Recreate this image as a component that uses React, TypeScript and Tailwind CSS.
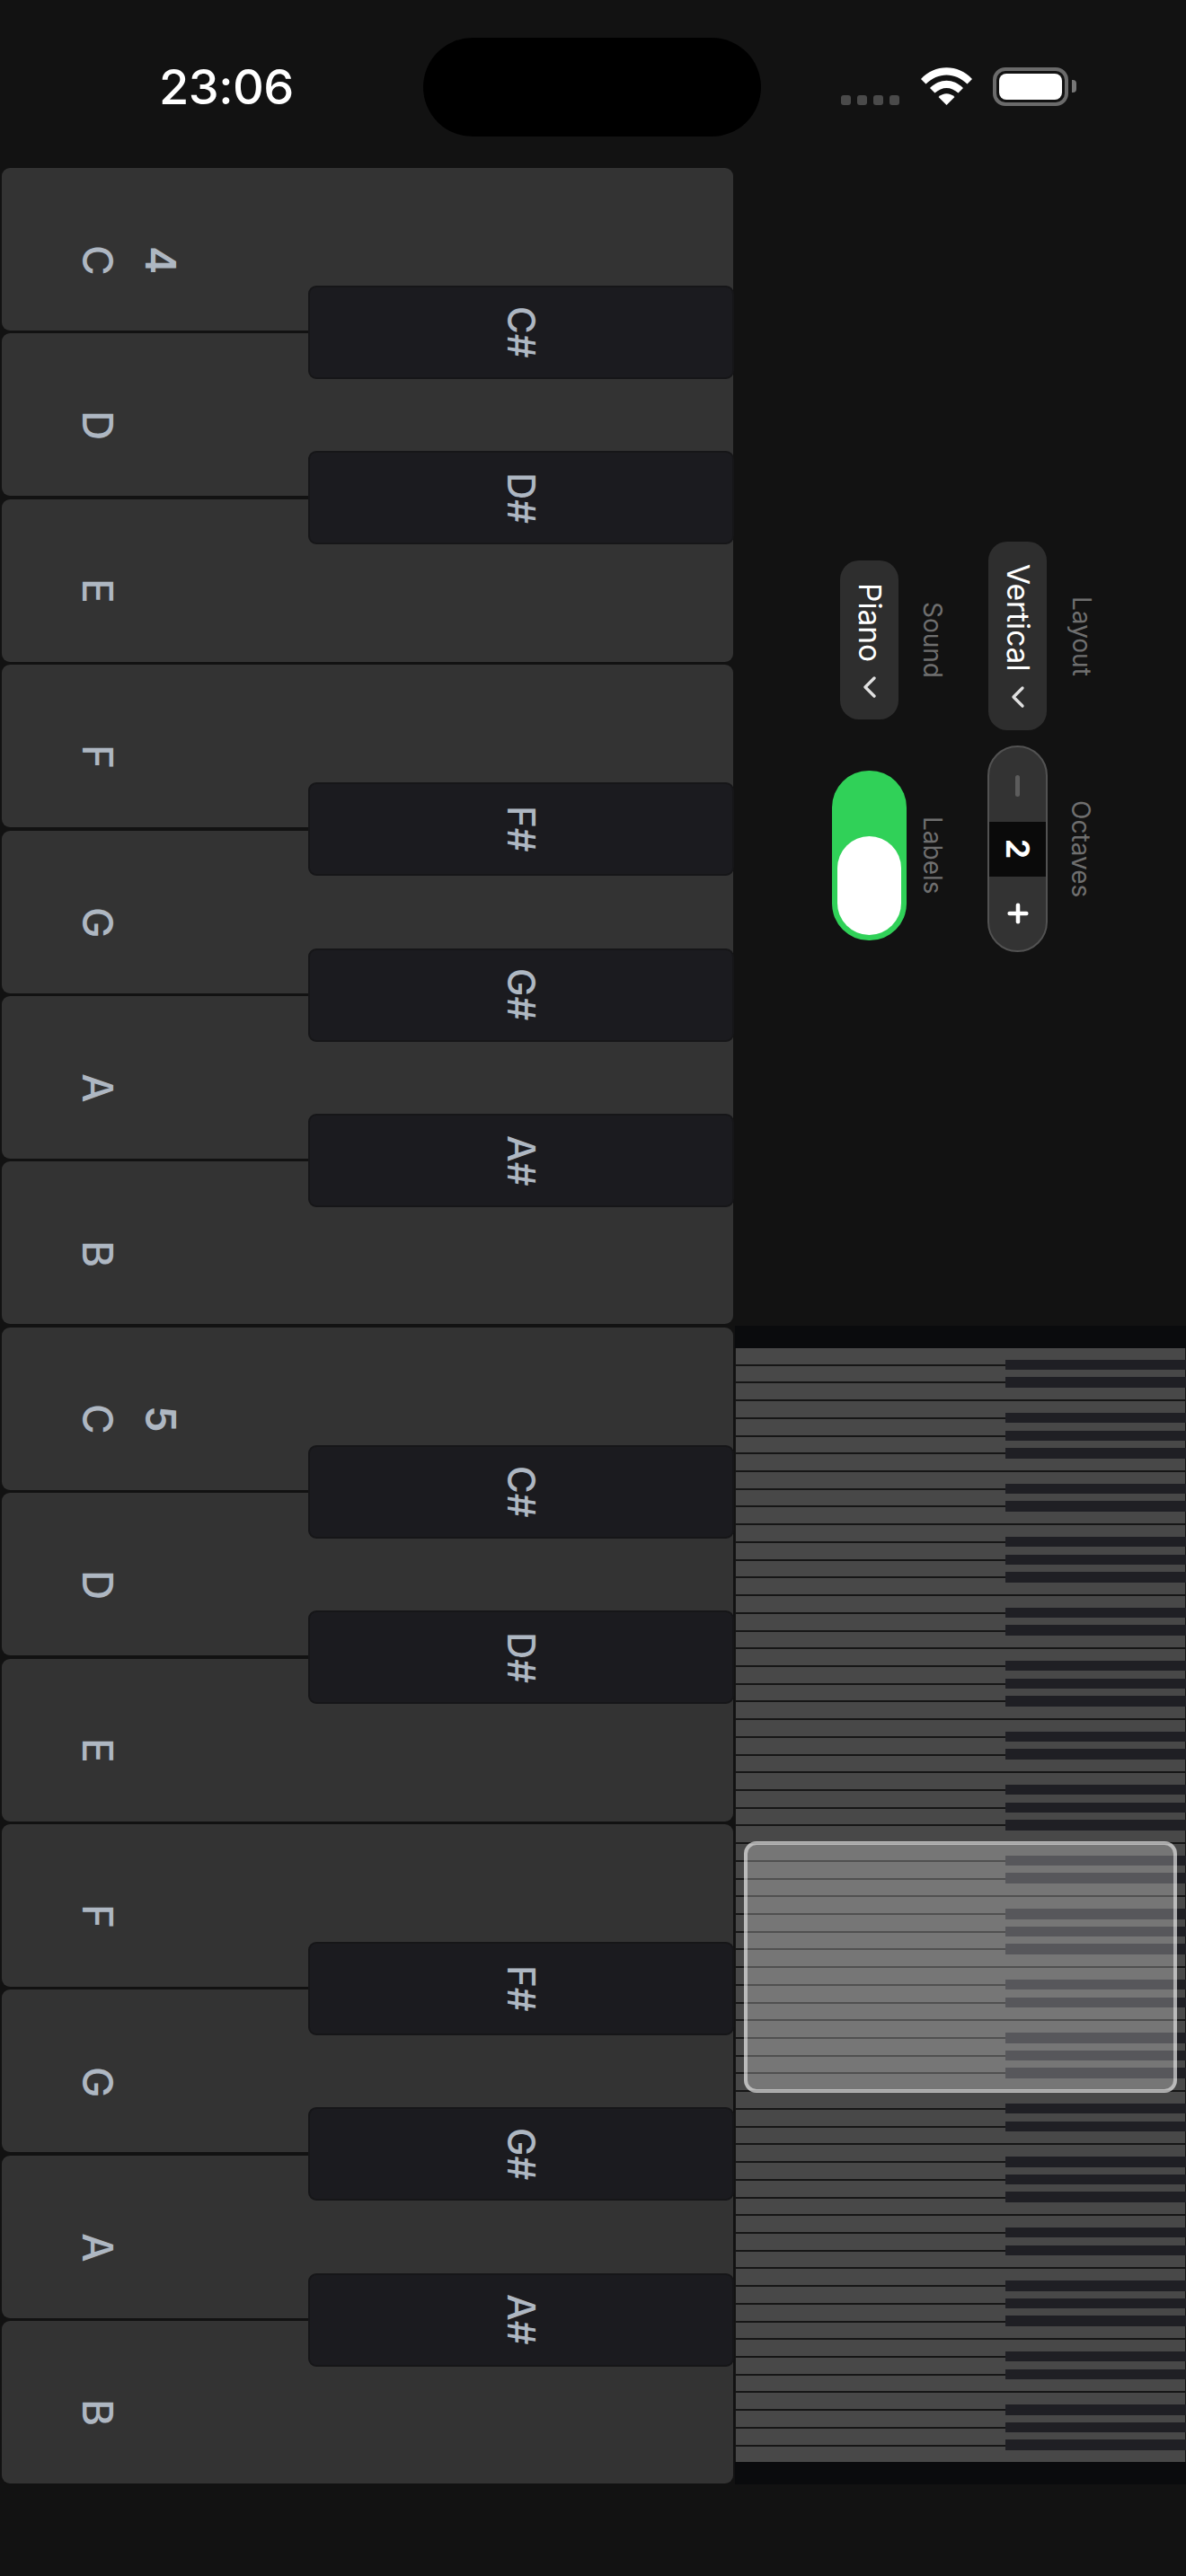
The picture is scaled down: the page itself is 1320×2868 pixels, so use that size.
import { ChevronLeft, Plus } from "lucide-react"

const WHITE_NOTES = ["C", "D", "E", "F", "G", "A", "B"]
const HAS_SHARP = [true, true, false, true, true, true, false]

const whiteKeys = [4, 5].flatMap((octave) =>
  WHITE_NOTES.map((note, i) => ({ note, octave, sharp: HAS_SHARP[i] }))
)

// minimap has all 9 octaves
const miniKeys = Array.from({ length: 63 }, (_, i) => HAS_SHARP[i % 7])

const vertical = "[writing-mode:vertical-rl] whitespace-nowrap"

function StatusBar() {
  return (
    <div className="relative h-[187px] shrink-0 flex items-start">
      <div className="ml-[177px] mt-[68px] w-[150px] text-[54px] leading-[58px] font-medium text-white tracking-[-0.5px]">23:06</div>
      <div className="ml-[144px] mt-[42px] w-[376px] h-[110px] rounded-[55px] bg-black"></div>
      <div className="ml-[89px] mt-[75px] flex items-end h-[43px]">
        <div className="flex gap-[7px] mb-[1px]">
          <span className="w-[11px] h-[11px] rounded-[3px] bg-[#4a4a4a]"></span>
          <span className="w-[11px] h-[11px] rounded-[3px] bg-[#4a4a4a]"></span>
          <span className="w-[11px] h-[11px] rounded-[3px] bg-[#4a4a4a]"></span>
          <span className="w-[11px] h-[11px] rounded-[3px] bg-[#4a4a4a]"></span>
        </div>
        <svg className="ml-[24px] mb-[1px]" width="57" height="42" viewBox="0 0 57 42" fill="#fff">
          <path d="M0 13C15-4 42-4 57 13L51.5 18.5C38 5 19 5 5.5 18.5Z" />
          <path d="M10 23C21 12 36 12 47 23L41.5 28.5C33.5 21 23.5 21 15.5 28.5Z" />
          <path d="M19.5 33C25 28 32 28 37.5 33L28.5 42Z" />
        </svg>
        <div className="ml-[23px] w-[84px] h-[43px] rounded-[14px] border-[4px] border-[#6b6b6b] p-[3px]">
          <div className="w-full h-full rounded-[8px] bg-white"></div>
        </div>
        <div className="ml-[4px] mb-[15px] w-[5px] h-[14px] rounded-r-[4px] bg-[#777]"></div>
      </div>
    </div>
  )
}

function WhiteKey({ note, octave, sharp, first }: any) {
  return (
    <div className="relative flex-1 rounded-[9px] bg-[#333333] flex items-center pl-[82px] pt-[24px] text-[#aeb7c2]">
      <span className={`${vertical} w-[50px] flex justify-center items-center text-[46px] leading-[50px] font-medium`}>{note}</span>
      {first && <span className={`${vertical} ml-[20px] w-[50px] flex justify-center items-center text-[47px] leading-[50px] font-semibold`}>{octave}</span>}
      {sharp && (
        <div className="absolute z-10 left-[341px] -right-[1px] -bottom-[54px] h-[104px] rounded-[9px] bg-[#1b1b1f] border-[2px] border-[#161618] flex items-center justify-center">
          <span className={`${vertical} text-[42px] leading-[50px] font-medium`}>{note}#</span>
        </div>
      )}
    </div>
  )
}

function Piano() {
  return (
    <div className="w-[818px] h-[2580px] pl-[2px] pr-[2px] pb-[2px] flex flex-col gap-[3.4px] shrink-0">
      {whiteKeys.map((k, i) => (
        <WhiteKey key={i} note={k.note} octave={k.octave} sharp={k.sharp} first={k.note === "C"} />
      ))}
    </div>
  )
}

function SideLabel({ children }: any) {
  return <span className={`${vertical} block text-[#6f6f6f] text-[28px] leading-[32px]`}>{children}</span>
}

function Select({ label }: any) {
  return (
    <div className="w-[65px] h-full rounded-[21px] bg-[#2e2e2e] flex flex-col items-center pt-[25px]">
      <span className={`${vertical} text-white text-[33.5px] leading-[40px]`}>{label}</span>
      <ChevronLeft className="w-10 h-10 text-[#e0e0e0] mt-[8px]" />
    </div>
  )
}

function Stepper() {
  return (
    <div className="w-[67px] h-[230px] rounded-[34px] border-[2px] border-[#525252] bg-[#333333] flex flex-col items-center overflow-hidden">
      <div className="h-[83px] w-full flex items-center justify-center pt-[2px]">
        <div className="w-[5px] h-[24px] rounded-[3px] bg-[#5c5c5c]"></div>
      </div>
      <div className="h-[61px] w-full bg-[#0a0a0a] flex items-center justify-center">
        <span className={`${vertical} text-white font-bold text-[35px] leading-[40px]`}>2</span>
      </div>
      <div className="flex-1 w-full flex items-center justify-center">
        <Plus className="w-[32px] h-[32px] text-white" strokeWidth={3.4} />
      </div>
    </div>
  )
}

function Toggle() {
  return (
    <div className="w-[83px] h-[189px] shrink-0 rounded-[41px] bg-[#30d158] flex items-end justify-center pb-[6px]">
      <div className="w-[71px] h-[110px] rounded-[36px] bg-white"></div>
    </div>
  )
}

function Controls() {
  return (
    <div className="h-[1289px] flex items-center pl-[108px]">
      <div className="w-[122px] shrink-0 mt-[8px] flex flex-col gap-[57px]">
        <div className="h-[177px] flex items-center">
          <div className="ml-[9px] h-full"><Select label="Piano" /></div>
          <div className="ml-[22px]"><SideLabel>Sound</SideLabel></div>
        </div>
        <div className="h-[189px] flex items-center">
          <Toggle />
          <div className="ml-[13px]"><SideLabel>Labels</SideLabel></div>
        </div>
      </div>
      <div className="ml-[51px] flex flex-col gap-[17px]">
        <div className="h-[210px] flex items-center">
          <div className="ml-[1px] h-full"><Select label="Vertical" /></div>
          <div className="ml-[23px]"><SideLabel>Layout</SideLabel></div>
        </div>
        <div className="h-[230px] flex items-center">
          <Stepper />
          <div className="ml-[21px]"><SideLabel>Octaves</SideLabel></div>
        </div>
      </div>
    </div>
  )
}

function Minimap() {
  return (
    <div className="relative h-[1290px] bg-[#0a0b0d] py-[25px]">
      <div className="h-[1240px] pl-[1px] flex flex-col gap-[2px] bg-[#161616]">
        {miniKeys.map((sharp, i) => (
          <div key={i} className="relative flex-1 bg-[#484848] mr-[1px]">
            {sharp && <div className="absolute z-10 left-[300px] -right-[1px] -bottom-[6.5px] h-[11.6px] bg-[#1f1f24]"></div>}
          </div>
        ))}
      </div>
      {/* viewport window */}
      <div className="absolute z-20 top-[574px] left-[10px] right-[10px] h-[280px] rounded-[14px] border-[4px] border-white/50 bg-white/25"></div>
    </div>
  )
}

export default function App() {
  return (
    <div className="w-[1320px] h-[2868px] bg-[#121212] overflow-hidden flex flex-col font-['Inter',sans-serif]">
      <StatusBar />
      <div className="flex items-start">
        <Piano />
        <div className="flex-1 min-w-0">
          <Controls />
          <Minimap />
        </div>
      </div>
    </div>
  )
}
